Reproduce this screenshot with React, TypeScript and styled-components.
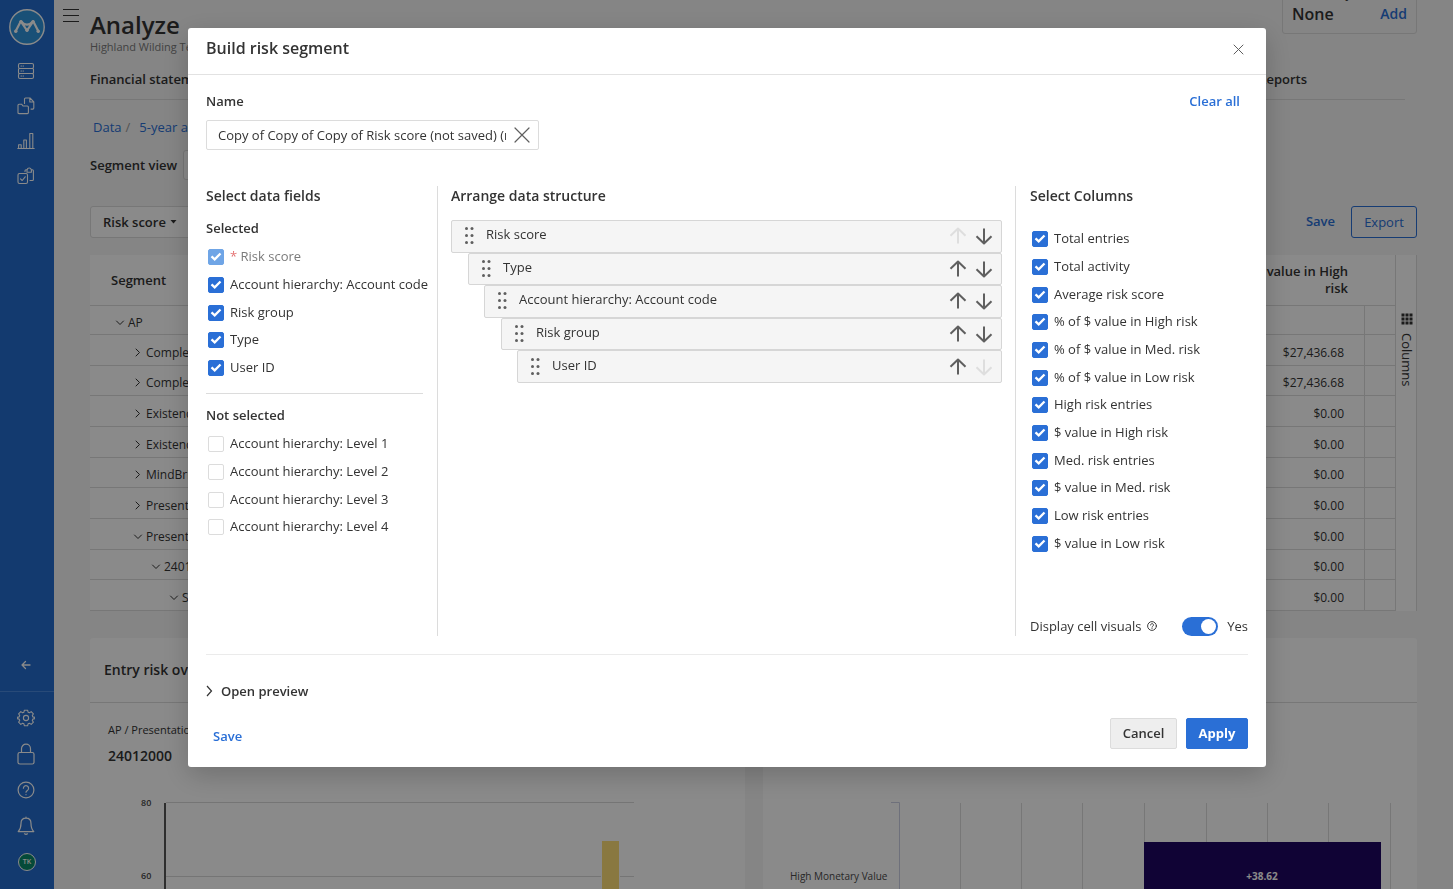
import React, { useState } from 'react';
import styled, { createGlobalStyle } from 'styled-components';

const color = {
  blue: '#2a6fd6',
  text: '#333333',
  muted: '#7a7a7a',
  line: '#dcdcdc',
  card: '#ffffff',
  page: '#f5f5f5',
};

const GlobalStyle = createGlobalStyle`
  * { box-sizing: border-box; }
  body {
    margin: 0;
    background: ${color.page};
    color: ${color.text};
    font-family: "Open Sans", "Noto Sans", sans-serif;
    font-size: 13px;
    line-height: 18px;
  }
  button, input, select { font: inherit; color: inherit; }
  button { cursor: pointer; }
  h1, h2, h3, p, ul { margin: 0; padding: 0; }
  ul { list-style: none; }
  a { color: ${color.blue}; text-decoration: none; }
`;

const Shell = styled.div`
  display: flex;
  height: 100vh;
  overflow: hidden;
`;

/* ---------- sidebar ---------- */

const Sidebar = styled.nav`
  width: 54px;
  flex: none;
  display: flex;
  flex-direction: column;
  background: #236ccd;
  color: #ffffff;
`;

const LogoLink = styled.a`
  display: block;
  height: 36px;
  margin: 9px 9px 0;
`;

const NavGroup = styled.div<{ $bottom?: boolean }>`
  display: flex;
  flex-direction: column;
  align-items: center;
  padding-right: 2px;
  ${(p) =>
    p.$bottom
      ? 'border-top: 1px solid #4b8ade; padding-top: 8px; padding-bottom: 9px;'
      : 'padding-top: 8px;'}
`;

const NavButton = styled.button<{ $tall?: boolean }>`
  display: flex;
  align-items: center;
  justify-content: center;
  width: 36px;
  height: ${(p) => (p.$tall ? 36 : 35)}px;
  padding: 0;
  border: 0;
  background: none;
  color: #ffffff;
`;

const CollapseButton = styled(NavButton)`
  align-self: center;
  margin: auto 2px 9px 0;
`;

const Avatar = styled.span`
  display: flex;
  align-items: center;
  justify-content: center;
  width: 18px;
  height: 18px;
  margin-left: 2px;
  border: 1px solid #ffffff;
  border-radius: 50%;
  background: #0b8a6a;
  font-size: 7px;
  font-weight: 600;
`;

/* ---------- page ---------- */

const Gutter = styled.div`
  width: 36px;
  flex: none;
  padding: 6px 0 0 7px;
`;

const MenuButton = styled.button`
  display: flex;
  width: 20px;
  height: 20px;
  padding: 2px;
  border: 0;
  background: none;
`;

const Page = styled.main`
  flex: 1;
  min-width: 0;
  margin-right: 36px;
`;

const PageHeader = styled.header`
  display: flex;
  justify-content: space-between;
  align-items: flex-start;
  height: 55px;
`;

const Titles = styled.div`
  padding-top: 11px;
`;

const PageTitle = styled.h1`
  font-size: 24px;
  line-height: 28px;
  font-weight: 600;
`;

const Subtitle = styled.p`
  font-size: 11px;
  line-height: 16px;
  color: ${color.muted};
`;

const Summary = styled.section`
  width: 135px;
  margin-top: -24px;
  padding: 8px 9px;
  border: 1px solid ${color.line};
  border-radius: 3px;

  p { font-size: 12px; }
`;

const SummaryRow = styled.div`
  display: flex;
  justify-content: space-between;
  align-items: center;
  font-size: 16px;
  line-height: 22px;
  font-weight: 600;
`;

const SummaryLink = styled.a`
  font-size: 14px;
`;

const Tabs = styled.nav`
  display: flex;
  justify-content: space-between;
  margin-right: 12px;
  padding: 15px 98px 11px 0;
  border-bottom: 1px solid ${color.line};
  font-weight: 600;

  a { color: ${color.text}; }
`;

const Breadcrumb = styled.nav`
  display: flex;
  gap: 4px;
  margin-top: 18px;
  padding-left: 3px;

  span { color: #9a9a9a; margin-right: 5px; }
`;

const SegmentView = styled.label`
  display: flex;
  align-items: center;
  gap: 6px;
  height: 30px;
  margin-top: 14px;
  font-weight: 600;
`;

const SegmentSelect = styled.select`
  width: 240px;
  height: 30px;
  border: 1px solid ${color.line};
  border-radius: 3px;
  background: ${color.card};
`;

const Toolbar = styled.div`
  display: flex;
  align-items: center;
  margin-top: 26px;
  height: 32px;
`;

const ScoreMenu = styled.button`
  display: flex;
  align-items: center;
  gap: 4px;
  width: 120px;
  height: 32px;
  padding: 0 12px;
  border: 1px solid ${color.line};
  border-radius: 3px;
  background: ${color.card};
  font-weight: 600;
`;

const TextButton = styled.button`
  padding: 0;
  border: 0;
  background: none;
  color: ${color.blue};
  font-weight: 600;
`;

const ToolbarSave = styled(TextButton)`
  margin: 0 16px 2px auto;
`;

const ExportButton = styled.button`
  width: 66px;
  height: 32px;
  padding: 0;
  border: 1px solid ${color.blue};
  border-radius: 3px;
  background: none;
  color: ${color.blue};
`;

const GridPanel = styled.section`
  display: flex;
  margin-top: 17px;
  background: ${color.card};
`;

const GridTable = styled.table`
  flex: 1;
  table-layout: fixed;
  border-collapse: separate;
  border-spacing: 0;
  font-size: 12px;

  th {
    height: 51px;
    padding: 0 17px 0 21px;
    border-bottom: 1px solid ${color.line};
    font-size: 13px;
    line-height: 17px;
    font-weight: 600;
    text-align: right;
  }
  th:first-child { text-align: left; }
  th:last-child, td:last-child { width: 30px; padding: 0; }
  td {
    height: 31px;
    padding: 5px 20px 0 0;
    border-bottom: 1px solid ${color.line};
    text-align: right;
  }
  td:nth-child(2) { border-right: 1px solid ${color.line}; }
  tr:nth-child(3n) td { height: 30px; }
  tbody tr:first-child td { height: 29px; }
`;

const SegmentCell = styled.div<{ $depth: number }>`
  display: flex;
  align-items: center;
  gap: 3px;
  padding-left: ${(p) => 25 + p.$depth * 18}px;
`;

const ColumnsRail = styled.button`
  display: flex;
  flex-direction: column;
  align-items: center;
  gap: 8px;
  width: 22px;
  padding: 58px 0 0 2px;
  border: solid ${color.line};
  border-width: 0 1px;
  background: ${color.card};

  span { writing-mode: vertical-rl; line-height: 16px; }
`;

const Cards = styled.div`
  display: grid;
  grid-template-columns: 1fr 1fr;
  gap: 18px;
  margin-top: 27px;
`;

const Card = styled.section`
  min-width: 0;
  overflow: hidden;
  border-radius: 3px;
  background: ${color.card};
`;

const CardHeader = styled.header`
  height: 65px;
  padding: 21px 14px;
  border-bottom: 1px solid ${color.line};

  h2 { font-size: 14px; line-height: 22px; font-weight: 600; }
`;

const CardBody = styled.div`
  height: 91px;
  padding: 18px 18px 0;

  p { font-size: 11px; }
  h3 { margin-top: 7px; font-size: 14px; line-height: 20px; font-weight: 600; }
`;

const Chart = styled.svg`
  display: block;
  font-size: 10px;
`;

/* ---------- dialog ---------- */

const Overlay = styled.div`
  position: fixed;
  inset: 0;
  padding: 28px 187px 28px 188px;
  overflow: auto;
  background: rgba(0, 0, 0, 0.46);
`;

const Dialog = styled.div`
  border-radius: 3px;
  background: #ffffff;
  box-shadow: 0 8px 28px rgba(0, 0, 0, 0.2);
`;

const DialogHeader = styled.header`
  display: flex;
  align-items: center;
  justify-content: space-between;
  height: 47px;
  padding: 0 22px 6px 18px;
  border-bottom: 1px solid #e2e2e2;

  h2 { font-size: 16px; line-height: 22px; font-weight: 600; }
`;

const IconButton = styled.button`
  display: flex;
  align-items: center;
  justify-content: center;
  padding: 0;
  border: 0;
  background: none;
  color: #5f5f5f;

  &:disabled { color: #dedede; cursor: default; }
`;

const CloseButton = styled(IconButton)`
  width: 11px;
  height: 11px;
  margin-top: 3px;
`;

const DialogBody = styled.div`
  padding: 17px 18px 18px;
`;

const NameRow = styled.div`
  display: flex;
  justify-content: space-between;
  padding-right: 8px;
  font-weight: 600;
`;

const NameField = styled.div`
  display: flex;
  align-items: center;
  width: 333px;
  height: 30px;
  margin-top: 10px;
  padding: 0 8px 0 11px;
  border: 1px solid ${color.line};
  border-radius: 2px;

  input {
    flex: 1;
    min-width: 0;
    margin-right: 8px;
    padding: 0;
    border: 0;
    outline: 0;
    background: none;
  }
`;

const Panels = styled.div`
  display: grid;
  grid-template-columns: 232px 1fr 233px;
  min-height: 450px;
  margin-top: 36px;
`;

const Panel = styled.section`
  display: flex;
  flex-direction: column;
`;

const FieldsPanel = styled(Panel)`
  padding-right: 14px;
  border-right: 1px solid ${color.line};
`;

const ArrangePanel = styled(Panel)`
  padding: 0 13px;
`;

const ColumnsPanel = styled(Panel)`
  padding-left: 14px;
  border-left: 1px solid ${color.line};
`;

const PanelTitle = styled.h3`
  font-size: 14px;
  line-height: 20px;
  font-weight: 600;
`;

const GroupTitle = styled.p<{ $ruled?: boolean }>`
  margin-bottom: 6px;
  font-weight: 600;
  ${(p) =>
    p.$ruled
      ? `margin-top: 11px; padding-top: 12px; border-top: 1px solid ${color.line};`
      : 'margin-top: 13px;'}
`;

const CheckList = styled.ul<{ $spaced?: boolean }>`
  margin-top: ${(p) => (p.$spaced ? 19 : 0)}px;
  padding-left: 2px;

  li { height: 28px; }
  li:nth-child(3n) { height: 27px; }
`;

const CheckLabel = styled.label<{ $disabled?: boolean }>`
  display: flex;
  align-items: center;
  gap: 6px;
  height: 28px;
  white-space: nowrap;
  color: ${(p) => (p.$disabled ? color.muted : color.text)};

  em { color: #e57373; font-style: normal; }
`;

const CheckText = styled.span`
  padding-bottom: 2px;
`;

const CheckBox = styled.span`
  position: relative;
  display: flex;

  input {
    appearance: none;
    width: 16px;
    height: 16px;
    margin: 0;
    border: 1px solid ${color.line};
    border-radius: 2px;
    background: #ffffff;
  }
  input:checked { border-color: ${color.blue}; background: ${color.blue}; }
  input:checked:disabled { border-color: #6fa5e6; background: #6fa5e6; }
  svg { position: absolute; inset: 0; pointer-events: none; }
  input:not(:checked) + svg { display: none; }
`;

const ArrangeList = styled.ul`
  display: grid;
  grid-auto-rows: 1fr;
  height: 163px;
  margin-top: 14px;
`;

const ArrangeItem = styled.li<{ $depth: number }>`
  display: flex;
  align-items: center;
  margin-left: ${(p) => Math.round((p.$depth * 33) / 2)}px;
  padding: 0 8px 0 11px;
  border: 1px solid #d6d6d6;
  border-radius: 2px;
  background: #f5f5f5;

  > span { flex: 1; margin-left: 11px; padding-bottom: 4px; }
`;

const Moves = styled.div`
  display: flex;
  gap: 8px;
`;

const VisualsRow = styled.div`
  display: flex;
  align-items: center;
  height: 20px;
  margin-top: auto;

  > svg { margin-left: 6px; }
`;

const Switch = styled.label`
  display: flex;
  align-items: center;
  gap: 9px;
  margin-left: auto;

  input {
    appearance: none;
    width: 36px;
    height: 19px;
    margin: 0;
    padding: 2px;
    border-radius: 10px;
    background: #b5b5b5;
  }
  input::before {
    content: "";
    display: block;
    width: 15px;
    height: 15px;
    border-radius: 50%;
    background: #ffffff;
  }
  input:checked { background: ${color.blue}; }
  input:checked::before { margin-left: 17px; }
`;

const Divider = styled.hr`
  height: 1px;
  margin: 18px 0 0;
  border: 0;
  background: #ebebeb;
`;

const PreviewButton = styled.button`
  display: flex;
  align-items: center;
  gap: 8px;
  margin-top: 27px;
  padding: 0;
  border: 0;
  background: none;
  font-weight: 600;
`;

const DialogFooter = styled.footer`
  display: flex;
  align-items: center;
  gap: 9px;
  margin-top: 18px;
`;

const FooterSave = styled(TextButton)`
  margin: 5px auto 0 7px;
`;

const ActionButton = styled.button<{ $primary?: boolean }>`
  width: ${(p) => (p.$primary ? 62 : 67)}px;
  height: 31px;
  padding: 0 0 2px;
  border: 1px solid ${(p) => (p.$primary ? color.blue : color.line)};
  border-radius: 2px;
  background: ${(p) => (p.$primary ? color.blue : '#eeeeee')};
  color: ${(p) => (p.$primary ? '#ffffff' : color.text)};
  font-weight: ${(p) => (p.$primary ? 700 : 600)};
`;

/* ---------- icons ---------- */

const Icon = ({
  size = 18,
  width = 1,
  children,
}: {
  size?: number;
  width?: number;
  children: React.ReactNode;
}) => (
  <svg
    width={size}
    height={size}
    viewBox={`0 0 ${size} ${size}`}
    fill="none"
    stroke="currentColor"
    strokeWidth={width}
    strokeLinecap="round"
    strokeLinejoin="round"
    aria-hidden="true"
  >
    {children}
  </svg>
);

const Logo = () => (
  <svg width="36" height="36" viewBox="0 0 36 36" aria-hidden="true">
    <circle cx="18" cy="18" r="17.2" fill="#2f94dd" stroke="#fff" strokeWidth="1.4" />
    <path
      d="M6.500 22.500L11.800 12.300l6.200 9.200 6.200-9.200 5.300 10.200M11.800 12.300q3.200 3.400 6.200 3.400t6.200-3.400"
      fill="none"
      stroke="#fff"
      strokeWidth="2.2"
      strokeLinecap="round"
      strokeLinejoin="round"
    />
    <g fill="#fff">
      <circle cx="6.800" cy="22.300" r="1.700" />
      <circle cx="12" cy="12.600" r="1.700" />
      <circle cx="18" cy="21.300" r="1.700" />
      <circle cx="24" cy="12.600" r="1.700" />
      <circle cx="29.200" cy="22.300" r="1.700" />
    </g>
  </svg>
);

const DataIcon = () => (
  <Icon width={1.1}>
    <rect x="1.5" y="1.5" width="15" height="5" rx="1.5" />
    <rect x="1.5" y="6.5" width="15" height="5" rx="1" />
    <rect x="1.5" y="11.5" width="15" height="5" rx="1.5" />
    <path d="M4 4h.5M6 4h.5M4 9h.5M6 9h.5M4 14h.5M6 14h.5" />
  </Icon>
);

const FilesIcon = () => (
  <Icon width={1.1}>
    <path d="M1 16V8.2q0-1 1-1h2.6L6 9h4.4q1 0 1 1v5.6q0 1-1 1H2q-1 0-1-1z" />
    <path d="M7.5 6.5V2q0-1 1-1H13l3.8 3.8v6.3q0 1-1 1H14M12.800 1.200V5h3.800" />
  </Icon>
);

const BarsIcon = () => (
  <Icon width={1.1}>
    <path d="M.8 16.500h16.400M1.600 16.200v-3.400h2.600v3.400M6.800 16.200V8h2.600v8.200M12.800 16.200V1.500h3v14.700" />
  </Icon>
);

const TasksIcon = () => (
  <Icon width={1.1}>
    <rect x="1" y="6.500" width="9.500" height="10" rx="1.500" />
    <path d="M3.500 11.800l1.700 1.700 3-3.700M8 4.500V3.800q0-1 1-1h1.200q.2-1.800 2-1.800t2 1.800h1.200q1 0 1 1v8.700q0 1-1 1h-2.400" />
    <path d="M10 3v2.300h4.400V3" />
  </Icon>
);

const BackIcon = () => (
  <Icon size={10} width={1.3}>
    <path d="M9 5H1M4.500 1.500L1 5l3.500 3.500" />
  </Icon>
);

const GearIcon = () => (
  <Icon width={1.1}>
    <circle cx="9" cy="9" r="2.6" />
    <path d="M7.400 1.200h3.200l.5 2 1.300.5 1.800-1.100 2.200 2.200-1.100 1.800.5 1.300 2 .5v1.200l-2 .5-.5 1.300 1.100 1.800-2.200 2.200-1.800-1.100-1.300.5-.5 2H7.400l-.5-2-1.300-.5-1.800 1.100-2.200-2.200 1.100-1.800-.5-1.300-2-.5V8.400l2-.5.5-1.300-1.100-1.800 2.200-2.200 1.800 1.100 1.300-.5z" />
  </Icon>
);

const LockIcon = () => (
  <svg width="18" height="22" viewBox="0 0 18 22" fill="none" stroke="currentColor" strokeWidth="1.2" aria-hidden="true">
    <rect x="1" y="9.500" width="16" height="11.500" rx="1.800" />
    <path d="M4.500 9.500V5.700a4.500 4.500 0 0 1 9 0v3.800" />
  </svg>
);

const HelpIcon = ({ small }: { small?: boolean }) => (
  <svg
    width={small ? 10 : 18}
    height={small ? 10 : 18}
    viewBox="0 0 18 18"
    fill="none"
    stroke="currentColor"
    strokeWidth={small ? 1.7 : 1.2}
    strokeLinecap="round"
    aria-hidden="true"
  >
    <circle cx="9" cy="9" r="7.900" />
    <path d="M6.400 7.200a2.600 2.600 0 1 1 4 2.200Q9 10.200 9 11.200M9 13.600v.1" />
  </svg>
);

const BellIcon = () => (
  <svg width="18" height="20" viewBox="0 0 18 20" fill="none" stroke="currentColor" strokeWidth="1.2" strokeLinecap="round" strokeLinejoin="round" aria-hidden="true">
    <path d="M9 2.200c-3.200 0-5 2.300-5 5.200 0 4.200-1 6.300-2.800 8.200h15.600C15 13.700 14 11.600 14 7.400c0-2.900-1.800-5.200-5-5.200zM9 1v1M7.500 17.800q1.500 1 3 0" />
  </svg>
);

const MenuIcon = () => (
  <Icon size={16} width={1.2}>
    <path d="M.5 1.500h15M.5 7.500h15M.5 13.500h15" />
  </Icon>
);

const Chevron = ({ open }: { open: boolean }) => (
  <Icon size={10}>
    <path d={open ? 'M1.500 3L5 6.500 8.500 3' : 'M3 1L6.500 4.500 3 8'} />
  </Icon>
);

const Caret = () => (
  <svg width="7" height="4" viewBox="0 0 7 4" fill="currentColor" aria-hidden="true">
    <path d="M.5 0h6L3.500 3.500z" />
  </svg>
);

const CrossIcon = ({ size, width }: { size: number; width: number }) => (
  <Icon size={size} width={width}>
    <path d={`M1 1L${size - 1} ${size - 1}M${size - 1} 1L1 ${size - 1}`} />
  </Icon>
);

const TickIcon = () => (
  <svg width="16" height="16" viewBox="0 0 16 16" fill="none" stroke="#fff" strokeWidth="2.3" aria-hidden="true">
    <path d="M3.500 7.300L6.700 10.300 12.500 4.500" />
  </svg>
);

const GripIcon = () => (
  <svg width="12" height="20" viewBox="0 0 12 20" fill="#5f5f5f" aria-hidden="true">
    {[3, 10, 17].map((y) => (
      <g key={y}>
        <circle cx="3.500" cy={y - 0.5} r="1.500" />
        <circle cx="9" cy={y - 0.5} r="1.500" />
      </g>
    ))}
  </svg>
);

const ArrowIcon = ({ down }: { down?: boolean }) => (
  <Icon width={2}>
    <path d={down ? 'M9 1.500v15M1.500 9.200L9 16.500l7.500-7.300' : 'M9 16.500v-15M1.500 8.800L9 1.500l7.500 7.300'} strokeLinecap="butt" />
  </Icon>
);

const GridIcon = () => (
  <svg width="12" height="12" viewBox="0 0 12 12" fill="currentColor" aria-hidden="true">
    {[0, 4, 8].map((y) => [0, 4, 8].map((x) => <rect key={`${x}-${y}`} x={x + 0.5} y={y + 0.5} width="3" height="3" />))}
  </svg>
);

const PreviewChevron = () => (
  <svg width="7" height="12" viewBox="0 0 7 12" fill="none" stroke="currentColor" strokeWidth="1.2" aria-hidden="true">
    <path d="M1 1l4.500 5L1 11" />
  </svg>
);

/* ---------- data ---------- */

const gridRows = [
  { name: 'AP', depth: 0, open: true, value: '' },
  { name: 'Completeness', depth: 1, open: false, value: '$27,436.68' },
  { name: 'Completeness', depth: 1, open: false, value: '$27,436.68' },
  { name: 'Existence', depth: 1, open: false, value: '$0.00' },
  { name: 'Existence', depth: 1, open: false, value: '$0.00' },
  { name: 'MindBridge', depth: 1, open: false, value: '$0.00' },
  { name: 'Presentation', depth: 1, open: false, value: '$0.00' },
  { name: 'Presentation', depth: 1, open: true, value: '$0.00' },
  { name: '24012000', depth: 2, open: true, value: '$0.00' },
  { name: 'S', depth: 3, open: true, value: '$0.00' },
];

const selectedFields = ['Risk score', 'Account hierarchy: Account code', 'Risk group', 'Type', 'User ID'];
const otherFields = [1, 2, 3, 4].map((n) => `Account hierarchy: Level ${n}`);
const structure = ['Risk score', 'Type', 'Account hierarchy: Account code', 'Risk group', 'User ID'];
const columns = [
  'Total entries',
  'Total activity',
  'Average risk score',
  '% of $ value in High risk',
  '% of $ value in Med. risk',
  '% of $ value in Low risk',
  'High risk entries',
  '$ value in High risk',
  'Med. risk entries',
  '$ value in Med. risk',
  'Low risk entries',
  '$ value in Low risk',
];

/* ---------- parts ---------- */

const Check = ({ label, checked, required }: { label: string; checked?: boolean; required?: boolean }) => (
  <li>
    <CheckLabel $disabled={required}>
      <CheckBox>
        <input type="checkbox" defaultChecked={checked} disabled={required} />
        <TickIcon />
      </CheckBox>
      <CheckText>
        {required && <em>* </em>}
        {label}
      </CheckText>
    </CheckLabel>
  </li>
);

const AppSidebar = () => (
  <Sidebar aria-label="Main">
    <LogoLink href="#" aria-label="Home">
      <Logo />
    </LogoLink>
    <NavGroup>
      <NavButton aria-label="Data"><DataIcon /></NavButton>
      <NavButton aria-label="Files"><FilesIcon /></NavButton>
      <NavButton aria-label="Analysis"><BarsIcon /></NavButton>
      <NavButton aria-label="Tasks"><TasksIcon /></NavButton>
    </NavGroup>
    <CollapseButton aria-label="Collapse"><BackIcon /></CollapseButton>
    <NavGroup $bottom>
      <NavButton $tall aria-label="Settings"><GearIcon /></NavButton>
      <NavButton $tall aria-label="Security"><LockIcon /></NavButton>
      <NavButton $tall aria-label="Help"><HelpIcon /></NavButton>
      <NavButton $tall aria-label="Notifications"><BellIcon /></NavButton>
      <NavButton $tall aria-label="Account"><Avatar>TK</Avatar></NavButton>
    </NavGroup>
  </Sidebar>
);

const SegmentGrid = () => (
  <GridPanel>
    <GridTable>
      <colgroup>
        <col />
        <col width="160" />
        <col width="30" />
      </colgroup>
      <thead>
        <tr>
          <th scope="col">Segment</th>
          <th scope="col">$ value in High<br />risk</th>
          <th aria-hidden="true" />
        </tr>
      </thead>
      <tbody>
        {gridRows.map((row, i) => (
          <tr key={i}>
            <td>
              <SegmentCell $depth={row.depth}>
                <Chevron open={row.open} />
                {row.name}
              </SegmentCell>
            </td>
            <td>{row.value}</td>
            <td />
          </tr>
        ))}
      </tbody>
    </GridTable>
    <ColumnsRail>
      <GridIcon />
      <span>Columns</span>
    </ColumnsRail>
  </GridPanel>
);

const EntryChart = () => (
  <Chart width="100%" height="146" role="img" aria-label="Entry risk">
    <g fill="#4a4a4a" fontSize="9" fontWeight="600">
      <text x="51" y="12">80</text>
      <text x="51" y="85">60</text>
    </g>
    <path d="M76 8.500h468M76 82.500h468" stroke="#d8d8d8" />
    <path d="M75 9v137" stroke="#555" strokeWidth="2" />
    <rect x="511" y="47" width="19" height="99" fill="#fff" />
    <rect x="512" y="47" width="17" height="99" fill="#fede76" />
  </Chart>
);

const ValueChart = () => (
  <Chart width="100%" height="146" role="img" aria-label="Risk drivers">
    <path d="M197.500 9v137M258.500 9v137M319.500 9v137M381.500 9v137M443.500 9v137M504.500 9v137M565.500 9v137M627.500 9v137" stroke="#dcdcdc" />
    <path d="M128 8.500h8.500V146" fill="none" stroke="#ccd0e4" />
    <rect x="381" y="48" width="237" height="98" fill="#1f0762" />
    <text x="27" y="86" fill="#4a4a4a">High Monetary Value</text>
    <text x="499" y="86" fill="#fff" fontWeight="700" textAnchor="middle">+38.62</text>
  </Chart>
);

const RiskSegmentDialog = () => {
  const [name, setName] = useState('Copy of Copy of Copy of Risk score (not saved) (not saved)');
  return (
    <Overlay>
      <Dialog role="dialog" aria-modal="true" aria-labelledby="dialog-title">
        <DialogHeader>
          <h2 id="dialog-title">Build risk segment</h2>
          <CloseButton aria-label="Close"><CrossIcon size={11} width={1} /></CloseButton>
        </DialogHeader>
        <DialogBody>
          <NameRow>
            <label htmlFor="segment-name">Name</label>
            <TextButton>Clear all</TextButton>
          </NameRow>
          <NameField>
            <input id="segment-name" type="text" value={name} onChange={(e) => setName(e.target.value)} />
            <IconButton aria-label="Clear name" onClick={() => setName('')}><CrossIcon size={16} width={1.2} /></IconButton>
          </NameField>

          <Panels>
            <FieldsPanel>
              <PanelTitle>Select data fields</PanelTitle>
              <GroupTitle>Selected</GroupTitle>
              <CheckList>
                {selectedFields.map((f, i) => <Check key={f} label={f} checked required={i === 0} />)}
              </CheckList>
              <GroupTitle $ruled>Not selected</GroupTitle>
              <CheckList>
                {otherFields.map((f) => <Check key={f} label={f} />)}
              </CheckList>
            </FieldsPanel>

            <ArrangePanel>
              <PanelTitle>Arrange data structure</PanelTitle>
              <ArrangeList>
                {structure.map((s, i) => (
                  <ArrangeItem key={s} $depth={i}>
                    <GripIcon />
                    <span>{s}</span>
                    <Moves>
                      <IconButton aria-label={`Move ${s} up`} disabled={i === 0}><ArrowIcon /></IconButton>
                      <IconButton aria-label={`Move ${s} down`} disabled={i === structure.length - 1}><ArrowIcon down /></IconButton>
                    </Moves>
                  </ArrangeItem>
                ))}
              </ArrangeList>
            </ArrangePanel>

            <ColumnsPanel>
              <PanelTitle>Select Columns</PanelTitle>
              <CheckList $spaced>
                {columns.map((c) => <Check key={c} label={c} checked />)}
              </CheckList>
              <VisualsRow>
                <span id="visuals-label">Display cell visuals</span>
                <HelpIcon small />
                <Switch>
                  <input type="checkbox" role="switch" defaultChecked aria-labelledby="visuals-label" />
                  Yes
                </Switch>
              </VisualsRow>
            </ColumnsPanel>
          </Panels>

          <Divider />
          <PreviewButton>
            <PreviewChevron />
            Open preview
          </PreviewButton>
          <DialogFooter>
            <FooterSave>Save</FooterSave>
            <ActionButton>Cancel</ActionButton>
            <ActionButton $primary>Apply</ActionButton>
          </DialogFooter>
        </DialogBody>
      </Dialog>
    </Overlay>
  );
};

export default function App() {
  return (
    <>
      <GlobalStyle />
      <Shell>
        <AppSidebar />
        <Gutter>
          <MenuButton aria-label="Menu"><MenuIcon /></MenuButton>
        </Gutter>
        <Page>
          <PageHeader>
            <Titles>
              <PageTitle>Analyze</PageTitle>
              <Subtitle>Highland Wilding Test</Subtitle>
            </Titles>
            <Summary>
              <p>Materiality</p>
              <SummaryRow>
                None
                <SummaryLink href="#">Add</SummaryLink>
              </SummaryRow>
            </Summary>
          </PageHeader>
          <Tabs aria-label="Sections">
            <a href="#">Financial statements</a>
            <a href="#">Reports</a>
          </Tabs>
          <Breadcrumb aria-label="Breadcrumb">
            <a href="#">Data</a>
            <span>/</span>
            <a href="#">5-year analysis</a>
          </Breadcrumb>
          <SegmentView>
            Segment view
            <SegmentSelect />
          </SegmentView>
          <Toolbar>
            <ScoreMenu>Risk score <Caret /></ScoreMenu>
            <ToolbarSave>Save</ToolbarSave>
            <ExportButton>Export</ExportButton>
          </Toolbar>
          <SegmentGrid />
          <Cards>
            <Card>
              <CardHeader><h2>Entry risk overview</h2></CardHeader>
              <CardBody>
                <p>AP / Presentation</p>
                <h3>24012000</h3>
              </CardBody>
              <EntryChart />
            </Card>
            <Card>
              <CardHeader />
              <CardBody />
              <ValueChart />
            </Card>
          </Cards>
        </Page>
      </Shell>
      <RiskSegmentDialog />
    </>
  );
}
